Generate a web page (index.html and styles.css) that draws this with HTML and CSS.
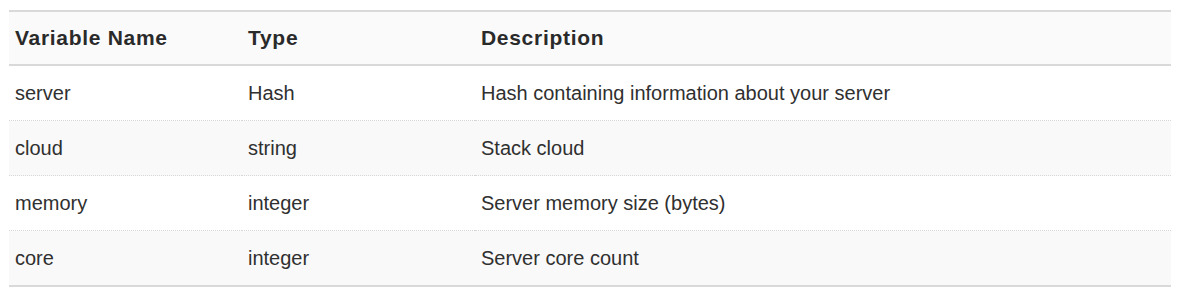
FILE: index.html
```html
<!DOCTYPE html>
<html lang="en">

<head>
    <meta charset="UTF-8">
    <title>Variables</title>
    <link rel="stylesheet" href="styles.css">
</head>

<body>
    <table class="vars">
        <thead>
            <tr>
                <th class="col-name">Variable Name</th>
                <th class="col-type">Type</th>
                <th>Description</th>
            </tr>
        </thead>
        <tbody>
            <tr>
                <td>server</td>
                <td>Hash</td>
                <td>Hash containing information about your server</td>
            </tr>
            <tr>
                <td>cloud</td>
                <td>string</td>
                <td>Stack cloud</td>
            </tr>
            <tr>
                <td>memory</td>
                <td>integer</td>
                <td>Server memory size (bytes)</td>
            </tr>
            <tr>
                <td>core</td>
                <td>integer</td>
                <td>Server core count</td>
            </tr>
        </tbody>
    </table>
</body>

</html>
```

FILE: styles.css
```css
body {
    margin: 0;
    padding: 10px 10px 0 9px;
    font-family: 'Liberation Sans', Arial, sans-serif;
    color: #303030;
    background: #fff;
}

.vars {
    width: 1162px;
    border-collapse: collapse;
    font-size: 20px;
}

.vars th,
.vars td {
    text-align: left;
    padding: 0 6px;
    height: 54px;
}

.vars th {
    height: 52px;
    font-size: 21px;
    font-weight: bold;
    background: #fafafa;
    letter-spacing: 0.7px;
    color: #2a2a2a;
}

.vars thead tr {
    border-top: 2px solid #d9d9d9;
    border-bottom: 2px solid #d9d9d9;
}

.col-name,
.col-type {
    width: 221px;
}

.vars tbody tr {
    border-top: 1px dotted #d6d6d6;
}

.vars tbody tr:first-child {
    border-top: none;
}

.vars tbody tr:nth-child(even) {
    background: #f9f9f9;
}

.vars tbody tr:last-child {
    border-bottom: 2px solid #d9d9d9;
}
```
